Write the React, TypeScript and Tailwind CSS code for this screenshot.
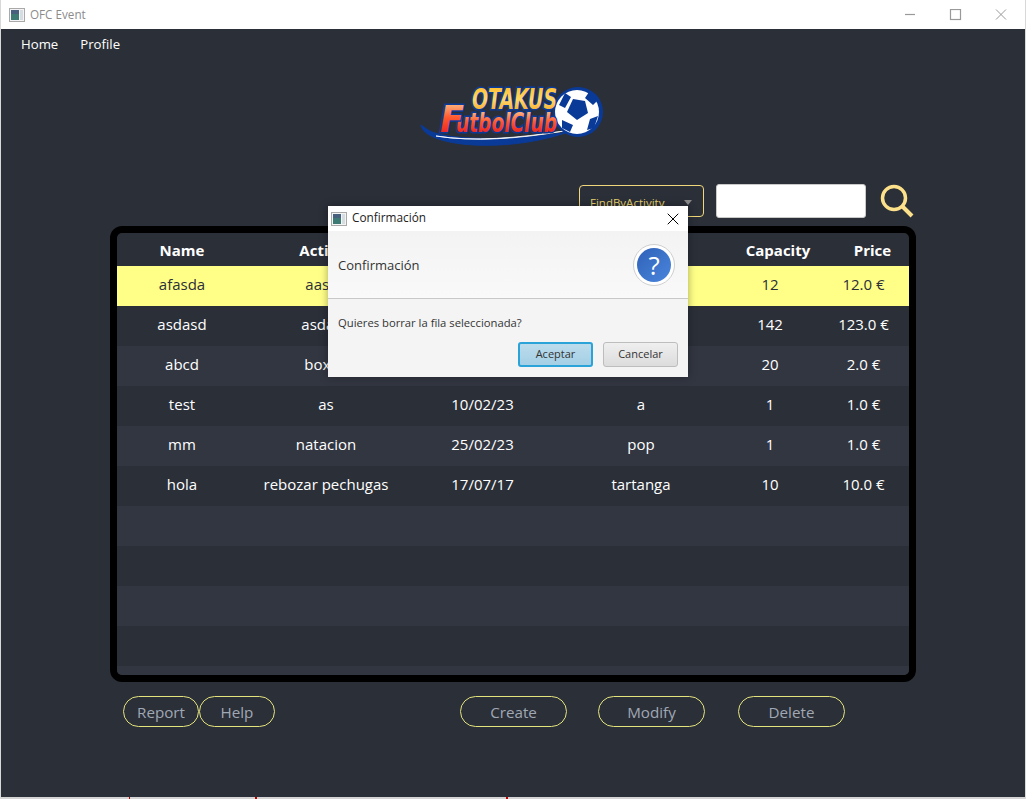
import { X } from "lucide-react";

const rows = [
  ["afasda", "aasda", "10/02/23", "asd", "12", "12.0 €"],
  ["asdasd", "asdasd", "10/02/23", "asd", "142", "123.0 €"],
  ["abcd", "boxeo", "10/02/23", "bilbao", "20", "2.0 €"],
  ["test", "as", "10/02/23", "a", "1", "1.0 €"],
  ["mm", "natacion", "25/02/23", "pop", "1", "1.0 €"],
  ["hola", "rebozar pechugas", "17/07/17", "tartanga", "10", "10.0 €"],
  ["", "", "", "", "", ""],
  ["", "", "", "", "", ""],
  ["", "", "", "", "", ""],
  ["", "", "", "", "", ""],
];

function WindowIcon({ className }: { className?: string }) {
  return (
    <svg viewBox="0 0 16 14" className={className}>
      <rect x="0.5" y="0.5" width="15" height="13" fill="#f4f4f4" stroke="#a9a9a9" />
      <rect x="2" y="2" width="8" height="10" fill="#3d7a74" />
      <rect x="2" y="2" width="8" height="4" fill="#47607e" />
      <rect x="11" y="2" width="3" height="10" fill="#d5dde0" />
    </svg>
  );
}

function Logo() {
  const stroke = { stroke: "#0a3a98", strokeWidth: 3, paintOrder: "stroke" as const };
  return (
    <svg viewBox="0 0 190 70" className="w-[190px] h-[70px]">
      <defs>
        <linearGradient id="top" x1="0" y1="0" x2="0" y2="1">
          <stop offset="0" stopColor="#ffb81f" />
          <stop offset="0.5" stopColor="#ffd86a" />
          <stop offset="1" stopColor="#f59a18" />
        </linearGradient>
        <linearGradient id="bottom" x1="0" y1="0" x2="0" y2="1">
          <stop offset="0" stopColor="#ffd9a0" />
          <stop offset="0.45" stopColor="#ff5a30" />
          <stop offset="1" stopColor="#e00a1c" />
        </linearGradient>
      </defs>
      <path d="M3 43 C5 57 40 65 80 63 C105 62 130 57 150 50 C110 57 40 60 14 50 C8 47 6 45 3 43 Z" fill="#0a3a98" stroke="#0a3a98" strokeWidth="1" />
      <path d="M18 54 C55 60 100 56 146 49 C100 57 55 60 18 54 Z" fill="#ffffff" stroke="#ffffff" strokeWidth="0.8" />
      <circle cx="160" cy="30" r="25" fill="#0a3a98" />
      <circle cx="159" cy="30" r="22" fill="#ffffff" />
      <path d="M155 17 L167 19 L170 31 L159 38 L149 30 Z" fill="#0a3a98" />
      <path d="M171 10 L180 18 L175 23 L167 16 Z M147 11 L153 15 L147 26 L141 23 Z M144 38 L155 43 L152 50 L144 46 Z M172 37 L180 34 L176 46 L169 48 Z" fill="#0a3a98" />
      <text x="54" y="27" fontFamily="'DejaVu Sans', sans-serif" fontWeight="700" fontStyle="italic" fontSize="28" textLength="85" lengthAdjust="spacingAndGlyphs" fill="url(#top)" {...stroke}>OTAKUS</text>
      <text x="38" y="50" fontFamily="'DejaVu Sans', sans-serif" fontWeight="700" fontStyle="italic" fontSize="26" textLength="101" lengthAdjust="spacingAndGlyphs" fill="url(#bottom)" {...stroke}>utbolClub</text>
      <text x="22" y="50" fontFamily="'DejaVu Sans', sans-serif" fontWeight="700" fontStyle="italic" fontSize="37" textLength="24" lengthAdjust="spacingAndGlyphs" fill="url(#bottom)" {...stroke}>F</text>
    </svg>
  );
}

function PillButton({ label, className }: { label: string; className: string }) {
  return (
    <button className={`h-[31px] rounded-[16px] border-[1.5px] border-[#e4e47c] text-[15.2px] text-[#a0a8b4] pt-[2px] ${className}`}>
      {label}
    </button>
  );
}

export default function App() {
  return (
    <div className="relative w-[1026px] h-[799px] overflow-hidden flex flex-col bg-[#2b2f38] font-['Open_Sans',sans-serif] border-x border-[#d8d8d8]">
      {/* TITLE BAR */}
      <div className="h-[29px] shrink-0 bg-white flex items-center pl-[8px] text-[#8b8b8b] text-[11.7px]">
        <WindowIcon className="w-[16px] h-[14px] mr-[5px]" />
        <span>OFC Event</span>
        <svg viewBox="0 0 102 12" className="ml-auto mr-[18px] w-[102px] h-[12px]" fill="none" stroke="#999999">
          <path d="M0 5.5 H10" strokeWidth="1.2" />
          <rect x="45.5" y="0.5" width="10" height="10" strokeWidth="1.2" />
          <path d="M91 0.5 L101 10.5 M101 0.5 L91 10.5" strokeWidth="1" />
        </svg>
      </div>

      {/* MENU */}
      <div className="h-[30px] shrink-0 flex items-center pl-[20px] pt-[2px] gap-[22px] text-[13.2px] text-white">
        <span>Home</span>
        <span>Profile</span>
      </div>

      {/* LOGO */}
      <div className="h-[65px] mt-[23px] shrink-0 flex justify-center overflow-visible">
        <Logo />
      </div>

      {/* SEARCH ROW */}
      <div className="mt-[37px] h-[34px] shrink-0 flex items-center pl-[578px]">
        <div className="w-[125px] h-[32px] rounded-[4px] border border-[#f0d77a] flex items-center justify-between pl-[10px] pr-[11px] text-[11.5px] text-[#e8d46f]">
          <span className="pt-[4px]">FindByActivity</span>
          <span className="mt-[2px] w-0 h-0 border-x-[4px] border-x-transparent border-t-[5px] border-t-[#8a8a8a]" />
        </div>
        <div className="ml-[12px] w-[150px] h-[34px] rounded-[3px] bg-white border border-[#c9c9c9]" />
        <svg viewBox="0 0 34 34" className="ml-[14px] w-[34px] h-[34px]" fill="none" stroke="#fde08a" strokeWidth="3.5">
          <circle cx="14" cy="14" r="11.5" />
          <path d="M22.5 22.5 L32 32" strokeWidth="4" />
        </svg>
      </div>

      {/* TABLE */}
      <div className="ml-[109px] mt-[8px] w-[806px] h-[456px] shrink-0 border-[7px] border-black rounded-[12px] overflow-hidden bg-[#2b2f38]">
        <div className="h-[33px] pt-[2px] grid grid-cols-[130px_158px_155px_162px_112px_77px] items-center text-[15px] font-bold text-white text-center">
          <div>Name</div>
          <div className="pl-[4px]">Activity</div>
          <div>Date</div>
          <div>Place</div>
          <div>Capacity</div>
          <div>Price</div>
        </div>
        {rows.map((row, i) => (
          <div
            key={i}
            className={`h-[40px] pb-[4px] grid grid-cols-[130px_158px_155px_162px_96px_91px] items-center text-[15px] text-center ${
              i === 0
                ? "bg-[#ffff88] text-[#2b2f38]"
                : i % 2 === 0
                  ? "bg-[#323641] text-white"
                  : "bg-[#2b2f38] text-white"
            }`}
          >
            {row.map((cell, j) => (
              <div key={j}>{cell}</div>
            ))}
          </div>
        ))}
        <div className="h-[9px] bg-[#323641]" />
      </div>

      {/* ACTIONS */}
      <div className="mt-[14px] flex pl-[122px]">
        <PillButton label="Report" className="w-[76px]" />
        <PillButton label="Help" className="w-[76px]" />
        <PillButton label="Create" className="w-[107px] ml-[185px]" />
        <PillButton label="Modify" className="w-[107px] ml-[31px]" />
        <PillButton label="Delete" className="w-[107px] ml-[33px]" />
      </div>

      {/* DESKTOP BEHIND THE WINDOW */}
      <div className="absolute bottom-0 left-0 right-0 h-[2px] bg-[#d4d4d4]" />
      <div className="absolute bottom-0 left-[128px] w-[1px] h-[2px] bg-[#c00000]" />
      <div className="absolute bottom-0 left-[254px] w-[2px] h-[2px] bg-[#c00000]" />
      <div className="absolute bottom-0 left-[505px] w-[2px] h-[2px] bg-[#c00000]" />

      {/* CONFIRM DIALOG */}
      <div className="absolute left-[327px] top-[206px] w-[360px] h-[171px] flex flex-col bg-[#f4f4f4] shadow-[0_0_8px_rgba(0,0,0,0.35)] text-[#333333]">
        <div className="h-[25px] shrink-0 bg-white flex items-center pl-[3px] text-[11.8px] text-[#222222]">
          <WindowIcon className="w-[16px] h-[14px] mr-[5px]" />
          <span className="pb-[2px]">Confirmación</span>
          <X size={20} strokeWidth={1.2} className="ml-auto mr-[5px] text-black" />
        </div>
        <div className="h-[68px] shrink-0 flex items-center justify-between px-[10px] pr-[13px] border-b border-[#c8c8c8] bg-gradient-to-b from-[#f3f3f3] to-[#f9f9f9] text-[13px]">
          <span className="pt-[2px]">Confirmación</span>
          <div className="w-[42px] h-[42px] rounded-full bg-white border border-[#cfcfcf] flex items-center justify-center">
            <div className="w-[34px] h-[34px] rounded-full bg-gradient-to-br from-[#2f62b8] to-[#4a86dc] text-white text-[26px] leading-[34px] text-center">
              ?
            </div>
          </div>
        </div>
        <div className="px-[10px] pt-[16px] text-[11.25px] leading-[15px]">Quieres borrar la fila seleccionada?</div>
        <div className="mt-[12px] flex justify-end gap-[10px] pr-[10px] text-[11px]">
          <button className="w-[75px] h-[25px] rounded-[3px] border-2 border-[#2aa3d8] bg-gradient-to-b from-[#bcdcec] to-[#a4cfe5]">
            Aceptar
          </button>
          <button className="w-[75px] h-[25px] rounded-[3px] border border-[#bdbdbd] bg-gradient-to-b from-[#efefef] to-[#dcdcdc]">
            Cancelar
          </button>
        </div>
      </div>
    </div>
  );
}
